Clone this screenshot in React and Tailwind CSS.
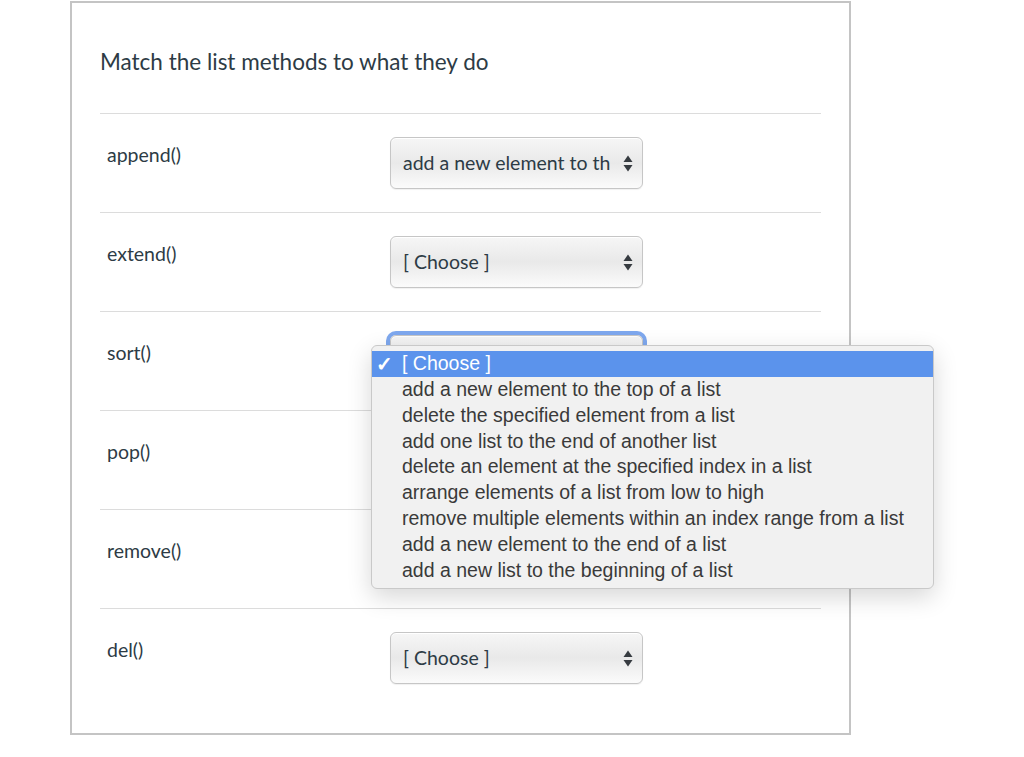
import React from "react";

const OPTIONS = [
  "[ Choose ]",
  "add a new element to the top of a list",
  "delete the specified element from a list",
  "add one list to the end of another list",
  "delete an element at the specified index in a list",
  "arrange elements of a list from low to high",
  "remove multiple elements within an index range from a list",
  "add a new element to the end of a list",
  "add a new list to the beginning of a list",
];

const ROWS = [
  { label: "append()", value: "add a new element to th" },
  { label: "extend()", value: "[ Choose ]" },
  { label: "sort()", value: "[ Choose ]", open: true },
  { label: "pop()", value: "[ Choose ]" },
  { label: "remove()", value: "[ Choose ]" },
  { label: "del()", value: "[ Choose ]" },
];

function Arrows() {
  return (
    <svg width="10" height="17" viewBox="0 0 10 17" className="shrink-0">
      <path d="M5 0.5 L9.5 7 H0.5 Z" fill="#363b40" />
      <path d="M5 16.5 L9.5 10 H0.5 Z" fill="#363b40" />
    </svg>
  );
}

function FakeSelect({ value, focused }) {
  return (
    <div
      className={
        "flex items-center justify-between w-[253px] h-[52px] pl-[12px] pr-[9px] rounded-[6px] border border-[#c6c6c6] bg-gradient-to-b from-[#f6f6f6] via-[#e9e9e9] to-[#fbfbfb] shadow-[inset_0_1px_0_#ffffff,0_1px_1px_rgba(0,0,0,0.06)] " +
        (focused ? "ring-4 ring-[#7ea8ee]" : "")
      }
    >
      <span className="text-[19.5px] text-[#2d3b45] whitespace-nowrap overflow-hidden">{value}</span>
      <Arrows />
    </div>
  );
}

function OptionMenu() {
  return (
    <div
      className="absolute left-[271px] top-[33px] w-[563px] z-10 pt-[5px] pb-[5px] rounded-[6px] border border-[#c9c9c9] bg-[#f1f1f1] shadow-[0_8px_24px_rgba(0,0,0,0.16)]"
      style={{ fontFamily: '"Liberation Sans", Arial, sans-serif' }}
    >
      {OPTIONS.map((opt, i) => (
        <div
          key={opt}
          className={
            "relative h-[25.8px] flex items-center pl-[30px] text-[19.5px] " +
            (i === 0 ? "bg-[#5b93ec] text-white" : "text-[#3a3a3a]")
          }
        >
          {i === 0 && <span className="absolute left-[4px] text-[20px] font-bold">✓</span>}
          {opt}
        </div>
      ))}
    </div>
  );
}

export default function App() {
  return (
    <div className="w-[1024px] h-[757px] bg-white overflow-hidden" style={{ fontFamily: "Lato, 'Open Sans', sans-serif" }}>
      <div className="ml-[70px] mt-[1px] w-[781px] h-[734px] border-2 border-[#c4c4c4] px-[28px]">
        <h1 className="pt-[41px] pb-[34px] text-[22.5px] leading-[35px] text-[#2d3b45]">
          Match the list methods to what they do
        </h1>
        {ROWS.map((row) => (
          <div key={row.label} className="relative flex h-[99px] border-t border-[#dcdcdc]">
            <div className="w-[290px] pl-[7px] pt-[28px] text-[19.5px] leading-[26px] text-[#2d3b45]">{row.label}</div>
            <div className="pt-[23px]">
              <FakeSelect value={row.value} focused={row.open} />
            </div>
            {row.open && <OptionMenu />}
          </div>
        ))}
      </div>
    </div>
  );
}
